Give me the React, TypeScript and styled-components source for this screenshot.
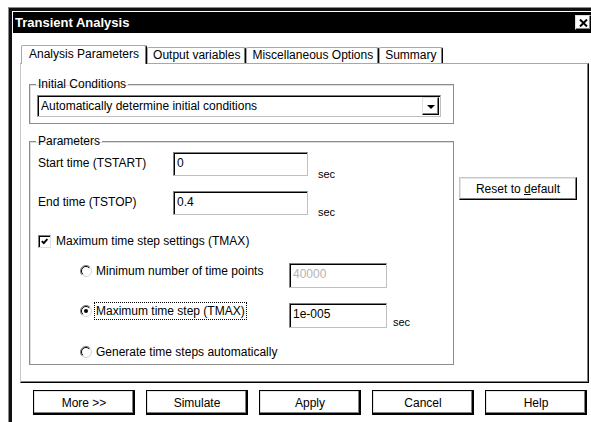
import React from "react";
import styled, { createGlobalStyle } from "styled-components";

const GlobalStyle = createGlobalStyle`
  html, body { margin: 0; padding: 0; background: #fff; overflow: hidden; }
  body { font-family: "Liberation Sans", Arial, sans-serif; font-size: 12px; color: #000; }
  * { box-sizing: border-box; }
`;

const Page = styled.div`
  width: 591px;
  height: 422px;
  overflow: hidden;
  padding: 8px 0 0 9px;
`;

const Window = styled.div`
  width: 586px;
  height: 430px;
  border-top: 3px solid #111;
  border-left: 3px solid #111;
  box-shadow: -1px -1px 0 #8a8a8a;
  padding: 1px 0 0 1px;
  background: #fff;
`;

const TitleBar = styled.div`
  height: 21px;
  background: #000;
  display: flex;
  align-items: center;
  justify-content: space-between;
  padding: 0 4px 0 2px;
`;

const Title = styled.span`
  color: #fff;
  font-weight: bold;
  font-size: 13px;
  line-height: 16px;
`;

const CloseButton = styled.div`
  width: 16px;
  height: 15px;
  background: #fff;
  border: 1px solid;
  border-color: #dfdfdf #000 #000 #dfdfdf;
  box-shadow: inset -1px -1px 0 #808080;
  display: flex;
  align-items: center;
  justify-content: center;
`;

const Body = styled.div`
  padding: 12px 6px 0 7px;
`;

const TabStrip = styled.div`
  display: flex;
  align-items: flex-end;
  height: 18px;
  padding-left: 1px;
`;

const Tab = styled.div<{ $active?: boolean }>`
  position: relative;
  z-index: ${(p) => (p.$active ? 2 : 0)};
  height: ${(p) => (p.$active ? 19 : 16)}px;
  margin-bottom: ${(p) => (p.$active ? -1 : 0)}px;
  padding: ${(p) => (p.$active ? "1px 7px 0" : "0 5px")};
  border: 1px solid #a8a8a8;
  border-bottom: none;
  border-right: 1px solid #000;
  border-radius: 2px 2px 0 0;
  box-shadow: inset -1px 0 0 #808080;
  background: #fff;
  line-height: 14px;
  white-space: nowrap;
`;

const Panel = styled.div`
  border-top: 1px solid #a8a8a8;
  border-left: 1px solid #c8c8c8;
  border-right: 1px solid #000;
  border-bottom: 1px solid #000;
  box-shadow: inset -1px -1px 0 #808080;
  padding: 13px 8px 17px 8px;
  display: flex;
  gap: 5px;
  align-items: flex-start;
`;

const GroupColumn = styled.div`
  width: 425px;
  display: flex;
  flex-direction: column;
  gap: 10px;
`;

const Group = styled.fieldset`
  margin: 0;
  min-width: 0;
  border: 1px solid #8c8c8c;
  box-shadow: inset 1px 1px 0 #dcdcdc;
  padding: 4px 8px 6px 6px;
  display: flex;
  flex-direction: column;
`;

const GroupParams = styled(Group)`
  gap: 15px;
  padding-bottom: 5px;
`;

const Legend = styled.legend`
  padding: 0 2px;
  line-height: 14px;
  font-size: 12px;
`;

const Combo = styled.div`
  margin-left: 1px;
  width: 404px;
  height: 22px;
  border: 1px solid;
  border-color: #808080 #c0c0c0 #c0c0c0 #808080;
  box-shadow: inset 1px 1px 0 #000;
  display: flex;
  align-items: center;
  padding: 1px 1px 1px 3px;
`;

const ComboText = styled.span`
  flex: 1;
  line-height: 14px;
  white-space: nowrap;
`;

const DropButton = styled.div`
  width: 17px;
  height: 18px;
  background: #fff;
  border: 1px solid;
  border-color: #dfdfdf #000 #000 #dfdfdf;
  box-shadow: inset -1px -1px 0 #808080;
  display: flex;
  align-items: center;
  justify-content: center;
`;

const Arrow = styled.div`
  width: 0;
  height: 0;
  border-left: 4px solid transparent;
  border-right: 4px solid transparent;
  border-top: 4px solid #000;
  margin-top: 1px;
`;

const FieldRow = styled.div`
  display: flex;
  align-items: flex-start;
  height: 24px;
  padding-left: 2px;
`;

const FieldLabel = styled.span`
  width: 135px;
  margin-top: 4px;
  line-height: 14px;
  white-space: nowrap;
`;

const Field = styled.div<{ $width: number; $height?: number; $disabled?: boolean }>`
  width: ${(p) => p.$width}px;
  height: ${(p) => p.$height ?? 24}px;
  border: 1px solid;
  border-color: #808080 #c0c0c0 #c0c0c0 #808080;
  box-shadow: inset 1px 1px 0 #000;
  padding: 3px 3px 0;
  line-height: 14px;
  color: ${(p) => (p.$disabled ? "#b4b4b4" : "#000")};
  background: #fff;
`;

const Unit = styled.span<{ $top: number; $gap: number }>`
  margin-top: ${(p) => p.$top}px;
  margin-left: ${(p) => p.$gap}px;
  line-height: 14px;
  font-size: 11px;
`;

const CheckRow = styled.div`
  display: flex;
  align-items: center;
  gap: 5px;
  height: 14px;
  padding-left: 2px;
  margin-top: 4px;
`;

const CheckBox = styled.div`
  width: 13px;
  height: 13px;
  border: 1px solid;
  border-color: #808080 #dfdfdf #dfdfdf #808080;
  box-shadow: inset 1px 1px 0 #000;
  background: #fff;
  display: flex;
  align-items: center;
  justify-content: center;
`;

const RadioRow = styled.div`
  display: flex;
  align-items: flex-start;
  padding-left: 44px;
  min-height: 14px;
`;

const RadioLabel = styled.span<{ $focused?: boolean }>`
  width: 193px;
  margin-left: 4px;
  margin-top: 1px;
  line-height: 14px;
  white-space: nowrap;
  span {
    outline: ${(p) => (p.$focused ? "1px dotted #000" : "none")};
    outline-offset: 1px;
  }
`;

const RadioIcon = styled.svg`
  margin-top: 2px;
  flex: none;
`;

const SideColumn = styled.div`
  margin-top: 100px;
`;

const Button = styled.button<{ $framed?: boolean }>`
  font-family: inherit;
  font-size: 12px;
  color: #000;
  background: #fff;
  padding: 0;
  border: 1px solid;
  border-color: ${(p) => (p.$framed ? "#000" : "#c8c8c8 #000 #000 #c8c8c8")};
  box-shadow: ${(p) =>
    p.$framed
      ? "inset -1px -1px 0 #000, inset -2px -2px 0 #808080, inset 1px 1px 0 #e4e4e4"
      : "inset -1px -1px 0 #808080, inset 1px 1px 0 #e4e4e4"};
  line-height: 14px;
`;

const ResetButton = styled(Button)`
  width: 118px;
  height: 23px;
`;

const ButtonRow = styled.div`
  display: grid;
  grid-template-columns: repeat(5, 102px);
  gap: 11px;
  margin-top: 7px;
  padding-left: 13px;
`;

const FooterButton = styled(Button)`
  height: 25px;
`;

const Radio = ({ checked }: { checked?: boolean }) => (
  <RadioIcon width="12" height="12" viewBox="0 0 12 12">
    <circle cx="6" cy="6" r="5.5" fill="#fff" stroke="#d4d4d4" />
    <path d="M2.1 9.9 A5.5 5.5 0 0 1 9.9 2.1" fill="none" stroke="#808080" />
    <path d="M2.8 9.2 A4.5 4.5 0 0 1 9.2 2.8" fill="none" stroke="#000" />
    {checked && <circle cx="6" cy="6" r="2" fill="#000" />}
  </RadioIcon>
);

export default function App() {
  return (
    <>
      <GlobalStyle />
      <Page>
        <Window>
          <TitleBar>
            <Title>Transient Analysis</Title>
            <CloseButton>
              <svg width="9" height="8" viewBox="0 0 9 8">
                <path d="M1 0.5 L8 7.5 M8 0.5 L1 7.5" stroke="#000" strokeWidth="2" />
              </svg>
            </CloseButton>
          </TitleBar>
          <Body>
            <TabStrip>
              <Tab $active>Analysis Parameters</Tab>
              <Tab>Output variables</Tab>
              <Tab>Miscellaneous Options</Tab>
              <Tab>Summary</Tab>
            </TabStrip>
            <Panel>
              <GroupColumn>
                <Group>
                  <Legend>Initial Conditions</Legend>
                  <Combo>
                    <ComboText>Automatically determine initial conditions</ComboText>
                    <DropButton>
                      <Arrow />
                    </DropButton>
                  </Combo>
                </Group>
                <GroupParams>
                  <Legend>Parameters</Legend>
                  <FieldRow>
                    <FieldLabel>Start time (TSTART)</FieldLabel>
                    <Field $width={135}>0</Field>
                    <Unit $top={15} $gap={10}>sec</Unit>
                  </FieldRow>
                  <FieldRow>
                    <FieldLabel>End time (TSTOP)</FieldLabel>
                    <Field $width={135}>0.4</Field>
                    <Unit $top={14} $gap={10}>sec</Unit>
                  </FieldRow>
                  <CheckRow>
                    <CheckBox>
                      <svg width="7" height="7" viewBox="0 0 7 7">
                        <path d="M0.8 3.2 L2.8 5.2 L6.4 1" fill="none" stroke="#000" strokeWidth="1.9" />
                      </svg>
                    </CheckBox>
                    <span>Maximum time step settings (TMAX)</span>
                  </CheckRow>
                  <RadioRow>
                    <Radio />
                    <RadioLabel>Minimum number of time points</RadioLabel>
                    <Field $width={98} $height={25} $disabled>40000</Field>
                  </RadioRow>
                  <RadioRow>
                    <Radio checked />
                    <RadioLabel $focused>
                      <span>Maximum time step (TMAX)</span>
                    </RadioLabel>
                    <Field $width={98} $height={25}>1e-005</Field>
                    <Unit $top={12} $gap={6}>sec</Unit>
                  </RadioRow>
                  <RadioRow>
                    <Radio />
                    <RadioLabel>Generate time steps automatically</RadioLabel>
                  </RadioRow>
                </GroupParams>
              </GroupColumn>
              <SideColumn>
                <ResetButton>
                  Reset to <u>d</u>efault
                </ResetButton>
              </SideColumn>
            </Panel>
            <ButtonRow>
              <FooterButton $framed>More &gt;&gt;</FooterButton>
              <FooterButton $framed>Simulate</FooterButton>
              <FooterButton $framed>Apply</FooterButton>
              <FooterButton $framed>Cancel</FooterButton>
              <FooterButton $framed>Help</FooterButton>
            </ButtonRow>
          </Body>
        </Window>
      </Page>
    </>
  );
}
